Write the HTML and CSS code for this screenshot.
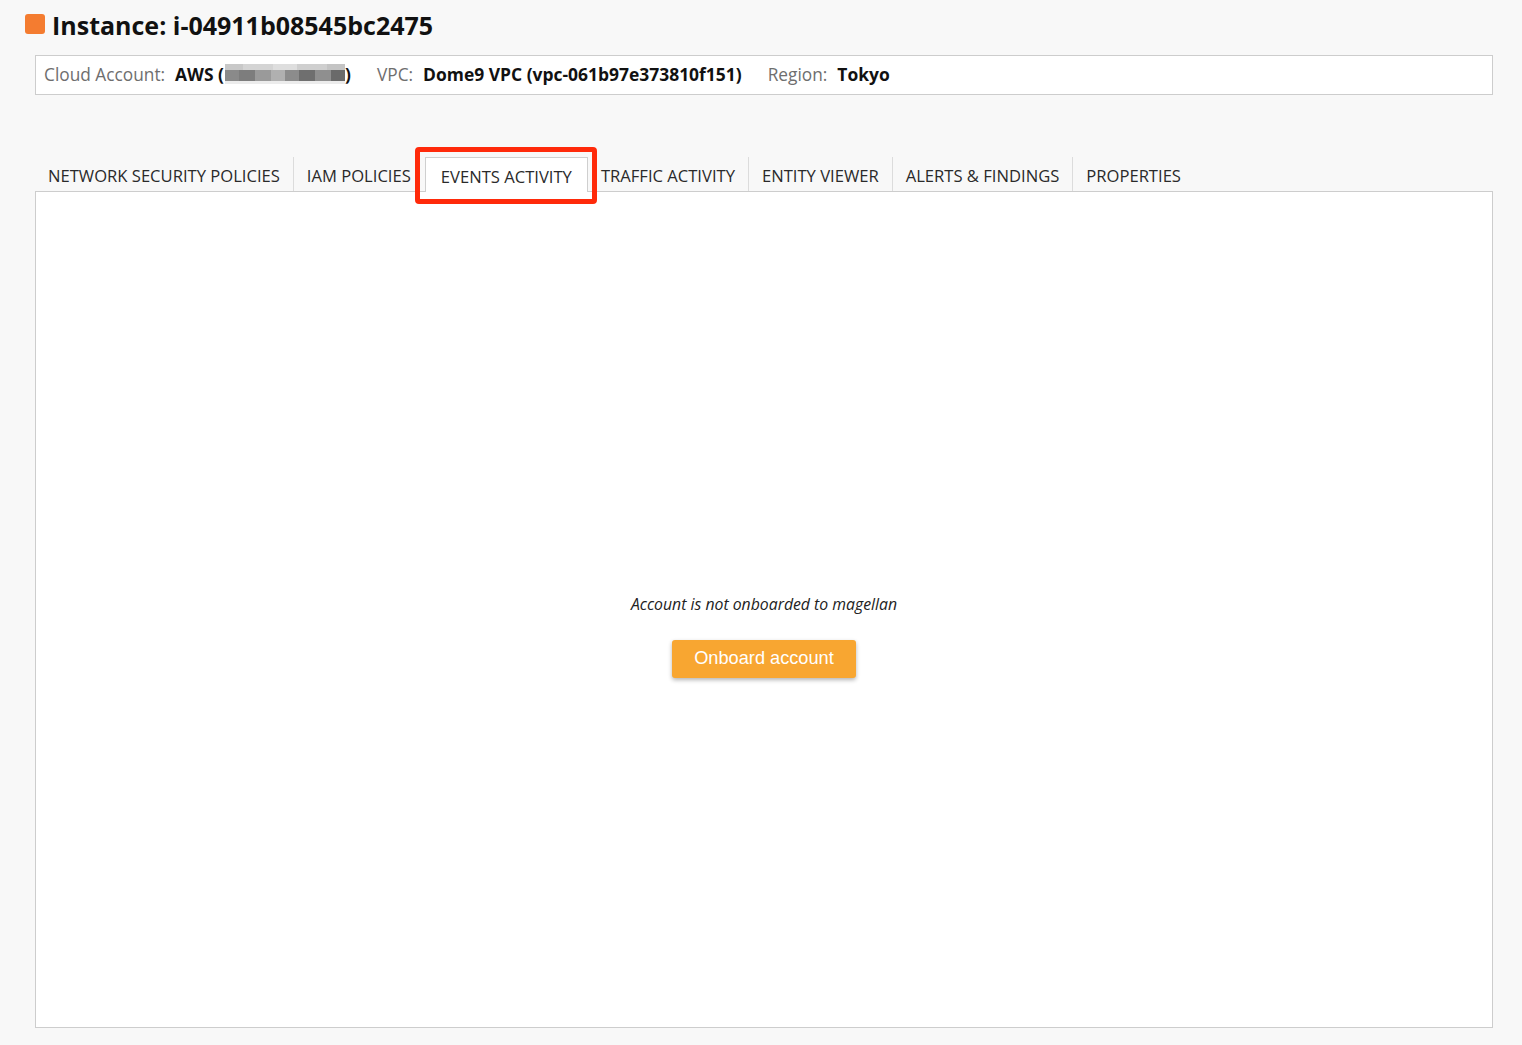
FILE: index.html
```html
<!DOCTYPE html>
<html>
<head>
<meta charset="utf-8">
<link rel="stylesheet" href="styles.css">
</head>
<body>
<div class="page">
  <h1 class="title"><span class="title-icon"></span>Instance: i-04911b08545bc2475</h1>
  <div class="info">
    <span class="label">Cloud Account:</span>
    <span class="value">AWS (<span class="mosaic"><span class="row r1"></span><span class="row r2"></span><span class="row r3"></span></span>)</span>
    <span class="label">VPC:</span>
    <span class="value">Dome9 VPC (vpc-061b97e373810f151)</span>
    <span class="label">Region:</span>
    <span class="value">Tokyo</span>
  </div>
  <div class="tabs">
    <div class="tab sep">NETWORK SECURITY POLICIES</div>
    <div class="tab">IAM POLICIES</div>
    <div class="tab active">EVENTS ACTIVITY<span class="highlight"></span></div>
    <div class="tab sep">TRAFFIC ACTIVITY</div>
    <div class="tab sep">ENTITY VIEWER</div>
    <div class="tab sep">ALERTS &amp; FINDINGS</div>
    <div class="tab">PROPERTIES</div>
  </div>
  <div class="panel">
    <p class="message">Account is not onboarded to magellan</p>
    <button class="onboard">Onboard account</button>
  </div>
</div>
</body>
</html>
```

FILE: styles.css
```css
html, body {
  margin: 0;
  padding: 0;
  background: #f8f8f8;
}
body {
  font-family: "Open Sans", "Noto Sans", sans-serif;
  color: #222;
}
.page {
  padding: 0 29px 17px 35px;
}
.title {
  margin: 0 0 0 -10px;
  height: 55px;
  display: flex;
  align-items: center;
  font-size: 25px;
  font-weight: 700;
  color: #111;
  letter-spacing: 0;
  padding-bottom: 6px;
  box-sizing: border-box;
}
.title-icon {
  display: inline-block;
  width: 20px;
  height: 20px;
  background: #f47c30;
  border-radius: 3px;
  margin-right: 7px;
  margin-top: -1px;
}
.info {
  height: 40px;
  box-sizing: border-box;
  border: 1px solid #cdcdcd;
  background: #fff;
  display: flex;
  align-items: center;
  padding-left: 8px;
  padding-bottom: 2px;
  font-size: 17.3px;
}
.label {
  color: #6e6e6e;
  margin-right: 10px;
}
.value {
  color: #111;
  font-weight: 700;
  margin-right: 26px;
  display: inline-flex;
  align-items: center;
  font-size: 17.45px;
}
.mosaic {
  display: inline-flex;
  flex-direction: column;
  width: 120px;
  height: 20px;
  margin: 0 0 0 1px;
}
.mosaic .row {
  flex: 1;
  display: block;
}
.mosaic .r1 {
  background: linear-gradient(90deg, #c8c8c8 0 15%, #d4d4d4 15% 40%, #dedede 40% 60%, #cfcfcf 60% 85%, #c4c4c4 85%);
}
.mosaic .r2 {
  flex: 1.6;
  background: linear-gradient(90deg, #8a8a8a 0 12%, #7d7d7d 12% 25%, #9a9a9a 25% 38%, #b0b0b0 38% 50%, #8c8c8c 50% 62%, #6f6f6f 62% 75%, #8f8f8f 75% 88%, #6a6a6a 88%);
}
.mosaic .r3 {
  flex: 0.5;
  background: #ececec;
}
.tabs {
  display: flex;
  align-items: flex-end;
  margin-top: 61px;
  height: 35px;
  font-size: 16.6px;
  color: #2a2a2a;
}
.tab {
  height: 34px;
  box-sizing: border-box;
  padding: 0 13px;
  display: flex;
  align-items: center;
  padding-top: 3px;
  position: relative;
  border-right: 1px solid transparent;
}
.tab.sep {
  border-right-color: #dcdcdc;
}
.tab.active {
  background: #fff;
  border: 1px solid #cfcfcf;
  border-bottom: none;
  padding: 3px 15px 0 15px;
  height: 35px;
  margin-bottom: -1px;
}
.highlight {
  position: absolute;
  left: -11px;
  right: -10px;
  top: -11px;
  bottom: -12px;
  border: 5px solid #ff2a0a;
  border-radius: 4px;
}
.panel {
  height: 837px;
  box-sizing: border-box;
  border: 1px solid #cdcdcd;
  background: #fff;
  display: flex;
  flex-direction: column;
  align-items: center;
  justify-content: center;
  padding-top: 51px;
}
.message {
  margin: 0 0 25px 0;
  font-style: italic;
  font-size: 15.8px;
  color: #222;
}
.onboard {
  width: 184px;
  height: 38px;
  border: none;
  border-radius: 3px;
  background: #f8a631;
  color: #fff;
  font-family: "Liberation Sans", Arial, sans-serif;
  font-size: 18.2px;
  box-shadow: 0 2px 4px rgba(0, 0, 0, 0.3);
  padding: 0;
}
```
